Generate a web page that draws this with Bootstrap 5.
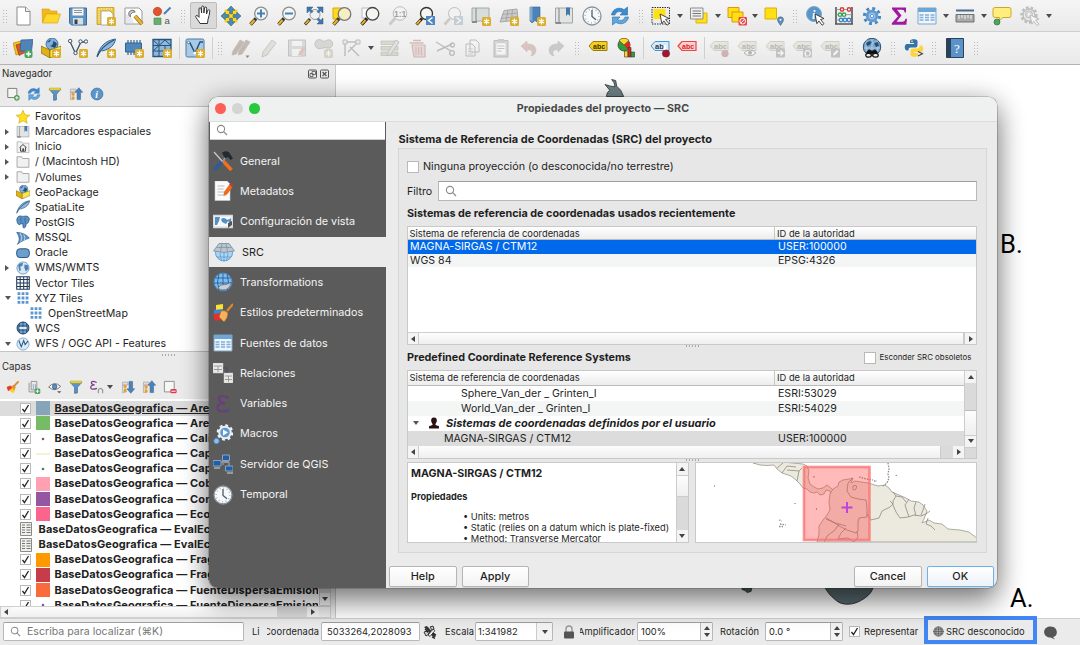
<!DOCTYPE html>
<html lang="es">
<head>
<meta charset="utf-8">
<title>QGIS</title>
<meta name="viewport" content="width=device-width, initial-scale=1">
<link href="https://cdn.jsdelivr.net/npm/bootstrap@5.3.0/dist/css/bootstrap.min.css" rel="stylesheet">
<script src="https://cdn.jsdelivr.net/npm/bootstrap@5.3.0/dist/js/bootstrap.bundle.min.js"></script>
<style>
html,body{height:645px;overflow:hidden}
body{font-family:Inter,"Liberation Sans",sans-serif;font-size:10.6px;line-height:15px;color:#1e1e1e;background:#ebebeb;width:1080px;white-space:nowrap}
svg{flex:none;display:block}
.app{width:1080px;height:645px}
.tbar{height:32.5px;background:linear-gradient(#f5f5f5,#e9e9e9);border-bottom:1px solid #cfcfcf;padding-left:1px}
.tbar.last{border-bottom:1.5px solid #b4b4b4;height:33px}
.tbar svg{width:20px;height:20px;margin:0 3.875px}
.tbar .hold{width:27.75px;height:27px;background:#dadada;border:1px solid #bcbcbc;border-radius:2px}
.tbar .hold svg{margin:2px 2.875px}
.grip{width:14px;height:14px;flex:none;background:radial-gradient(circle,#b9b9b9 .7px,transparent .9px) 0 0/3px 3px content-box;padding:0 4px}
.vsep{height:22px;width:1px;background:#cfcfcf;flex:none;margin:0 2px 0 3px}
.dar{width:9.9px;flex:none;display:flex;justify-content:center}
.dar::after,.tri-d::after{content:"";border:3px solid transparent;border-top:4px solid #4c4c4c;border-bottom:0}
.off{opacity:.42}
.side{width:336px;border-right:1px solid #c9c9c9;background:#ebebeb}
.dock-t{height:17px;padding:0 5px 0 2px;font-size:9.7px;color:#2a2a2a}
.dbar{height:24px;padding-left:4.5px;gap:5.2px}
.dbar svg{width:16px;height:14px}
.dbar .dar{margin:0 -1px 0 -5px}
.tree{background:#fff;height:246px;width:331px;padding-top:1.5px;border-top:1px solid #c5c5c5;border-bottom:1px solid #c5c5c5;overflow:hidden}
.trow{height:15.15px;padding-left:16px;gap:5px}
.trow svg{width:14px;height:14px}
.trow .tw{width:16px;margin-left:-16px;margin-right:-5px;display:flex;padding-left:4.5px}
.tri-r::after{content:"";border:3px solid transparent;border-left:4px solid #555;border-right:0}
.tri-d::after{border-top-color:#555}
.dots{width:14px;height:2px;background:radial-gradient(circle,#aaa .7px,transparent .9px) 0 0/3px 2px}
.layers{background:#fff;width:331px;height:206.5px;padding-top:1.2px;overflow:hidden;position:relative}
.lrow{height:15.16px;padding-left:19.5px;font-weight:700;font-size:11px;letter-spacing:.1px;color:#222;width:318px;overflow:hidden}
.lrow.cur{background:#dcdcdc;text-decoration:underline;width:331px}
.cb{width:11px;height:11px;border:1px solid #b9b9b9;background:#fff;flex:none}
.cb svg{width:9px;height:9px}
.sw{width:14px;height:14px;margin:0 5px;flex:none;display:flex;align-items:center;justify-content:center}
.lrow .tabi{width:12px;height:14px;margin-right:7px}
.sb{background:#dadada;border:1px solid #cfcfcf;flex:none}
.sb .th{background:linear-gradient(#fdfdfd,#efefef)}
.arr{display:flex;align-items:center;justify-content:center;background:#f4f4f4;flex:none}
.arr::after{content:"";border:3px solid transparent}
.al::after{border-right:4px solid #444;border-left:0}.ar::after{border-left:4px solid #444;border-right:0}
.au::after{border-bottom:4px solid #444;border-top:0}.ad::after{border-top:4px solid #444;border-bottom:0}
.stat{height:27px;border-top:1px solid #cfcfcf;background:#ebebeb;position:relative;font-size:9.3px;letter-spacing:.1px;padding-left:3px}
.fld{background:#fff;border:1px solid #b8b8b8;border-top-color:#9f9f9f;border-radius:2px;height:19px;display:flex;align-items:center;flex:none}
.clipt{overflow:hidden;flex:none}
.spin{width:12px;height:100%;background:#f4f4f4;border-left:1px solid #bbb;display:flex;flex-direction:column;align-items:center;justify-content:center;gap:3px}
.spin::before{content:"";border:3px solid transparent;border-bottom:4px solid #444;border-top:0}
.spin::after{content:"";border:3px solid transparent;border-top:4px solid #444;border-bottom:0}
.crsbox{width:112.5px;height:28px;border:4px solid #4285f4;position:absolute;left:924px;top:-3px;font-size:9.35px;letter-spacing:0;padding-top:3px}
.note{position:absolute;font-family:Roboto,sans-serif;font-size:25.5px;line-height:24px;color:#000}
/* project properties window */
.dlg{position:absolute;left:209px;top:97px;width:788px;height:491px;border-radius:9px;background:#ebebeb;box-shadow:0 0 0 .6px rgba(0,0,0,.3),0 14px 28px rgba(0,0,0,.45),0 0 26px rgba(0,0,0,.2);overflow:hidden}
.dt{height:24.5px;background:#eff1f1;border-bottom:1px solid #dcdcdc;font-weight:700;font-size:10.7px;letter-spacing:.05px;color:#484848}
.tl{width:10.6px;height:10.6px;border-radius:50%}
.nav-side{width:177px;background:#5b5b5b;color:#f3f3f3;font-size:10.8px}
.nsearch{height:18.5px;background:#fff;border-bottom:1px solid #ccc;margin:0 1px 6px;padding-left:6px}
.ni{height:30.32px;padding-left:4px;gap:7px}
.ni svg{width:20px;height:20px}
.ni.on{background:#ebebeb;color:#222}
.ni.on svg{width:22px}
.h-b{font-weight:700;color:#1f1f1f}
.grp{border:1px solid #d6d6d6;background:#e7e7e7;width:589px;height:405px;padding:0 9.5px 0 8px}
.tbl{background:#fff;border:1px solid #c9c9c9;width:570px;overflow:hidden}
.th-r{height:13.5px;background:linear-gradient(#fff,#ececec);border-bottom:1px solid #bcbcbc;font-size:9.35px;line-height:13px}
.c1{width:366px;flex:none;padding-left:2px}
.th-r .c2{border-left:1px solid #c6c6c6;padding-left:2px}
.c2{padding-left:4px}
.alt{background:#f4f6f6}
.btnx{width:67.5px;height:20.5px;border:1px solid #b5b5b5;border-radius:2px;background:linear-gradient(#fff,#f3f3f3);font-size:10.9px;padding:0;color:#1e1e1e;line-height:18px;box-shadow:0 1px 1px rgba(0,0,0,.1);font-weight:500}
.btnx.prim{border:1.5px solid #6db1ec;background:linear-gradient(#fff,#edf3fa)}
</style>
</head>
<body>
<svg class="d-none">
<defs>
<g id="gb"><rect x="11" y="11" width="9" height="9" rx="1.5" fill="#dcae2c"/><path d="M15.500 12.500v6M12.900 14l5.200 3M18.100 14l-5.200 3" stroke="#fff" stroke-width="1.300"/></g>
<g id="mag"><path d="M7 12.500L1.500 18.500" stroke="#333" stroke-width="3.400"/><path d="M5.500 14L1.700 18.200" stroke="#f0b51c" stroke-width="2.200"/><circle cx="12" cy="7.500" r="6.300" fill="#f3f5f4" fill-opacity=".9" stroke="#8c8f8f" stroke-width="1.300"/></g>
<g id="tag"><path d="M1 10l4-4.500h14v9H5z"/></g>
<g id="arrowcur"><path d="M9 8l9 4.500-3.400 1 3.400 4.200-1.900 1.500-3.300-4.300-1.900 2.800z" fill="#fff" stroke="#333" stroke-width=".9"/></g>
<g id="sq9"><path d="M3 2.500h3.600v3.600H3zM8.200 2.500h3.600v3.600H8.200zM13.400 2.500H17v3.600h-3.600zM3 8.200h3.600v3.600H3zM8.200 8.200h3.600v3.600H8.200zM13.400 8.200H17v3.600h-3.600zM3 13.900h3.600v3.600H3zM8.200 13.900h3.600v3.600H8.200zM13.400 13.900H17v3.600h-3.600z"/></g>
<g id="abgb"><use href="#tag" y="-2" fill="#d9d7c8" stroke="#aaa58c"/><text x="5" y="11" font-size="7.500" font-weight="700" font-family="Liberation Sans" fill="#666">abc</text></g>
</defs>
<symbol id="new" viewBox="0 0 20 20"><path d="M4 1h8.500L17 5.500V19H4z" fill="#fff" stroke="#8a8a8a"/><path d="M12.500 1v4.500H17" fill="#eee" stroke="#8a8a8a"/></symbol>
<symbol id="open" viewBox="0 0 20 20"><path d="M1 3h7l1.500 2H16v3H5L1.500 17z" fill="#f2b91b" stroke="#d99a10" stroke-width=".6"/><path d="M5 8h14.500L16.500 17h-15z" fill="#ffd82e" stroke="#dca716" stroke-width=".7"/></symbol>
<symbol id="save" viewBox="0 0 20 20"><path d="M1.500 2h17v17h-15l-2-2z" fill="#5c92c4" stroke="#3d6a96"/><path d="M4.500 2.500h11v7h-11z" fill="#f6f6f6"/><path d="M6 4.500h8M6 6.500h8" stroke="#888" stroke-width=".9"/><path d="M5 12h10v6.500H5z" fill="#d7dde2"/><path d="M6.500 13.500h3V18h-3z" fill="#36414c"/></symbol>
<symbol id="layout" viewBox="0 0 20 20"><path d="M1 1.500h17v17H1z" fill="#f5c733" stroke="#b8911c" stroke-width=".7"/><path d="M5 5h9l3 3v11H5z" fill="#fff" stroke="#999" stroke-width=".8"/><path d="M3 3v14M5 3h12" stroke="#fff" stroke-dasharray="1 1.500"/><use href="#gb"/></symbol>
<symbol id="lman" viewBox="0 0 20 20"><path d="M1 2h14l3 3v13H1z" fill="#fff" stroke="#999"/><path d="M2 8q6 2 8 9H2z" fill="#e4e9ed"/><path d="M11 10l7 8" stroke="#7a5c14" stroke-width="4"/><path d="M11 10l7 8" stroke="#e8b432" stroke-width="2.800"/><path d="M6.300 5.200a3.600 3.600 0 1 0 5 5l-2.300-.2-2-2z" transform="rotate(90 8.500 8)" fill="#c9ccd0" stroke="#555" stroke-width=".8"/></symbol>
<symbol id="style" viewBox="0 0 20 20"><circle cx="5.500" cy="5.500" r="4.200" fill="#e2542c" stroke="#b13c1c" stroke-width=".6"/><path d="M12 8l6.500-6.500" stroke="#4c82b5" stroke-width="2.200"/><path d="M2 12h7v6.500H2z" fill="#66b06f" stroke="#3e8748" stroke-width=".6"/><text x="12.500" y="17.500" font-size="9.500" font-family="Liberation Sans" fill="#555">a</text></symbol>
<symbol id="hand" viewBox="0 0 20 20"><path d="M7 18.500C5.500 15.500 3 13 2.600 11.300c.6-1.500 2.200-.8 3.400 1V4c0-1.700 2-1.700 2.200 0l.4 4V2.200c.2-1.600 2.200-1.500 2.300 0V8l.6-5c.4-1.500 2.200-1.300 2.200.2L13.500 9l1.200-3.500c.6-1.300 2.300-.8 2.100.7-.3 2.800-.9 5.500-1.800 8.300l-.5 4z" fill="#fff" stroke="#333" stroke-width="1"/></symbol>
<symbol id="pan" viewBox="0 0 20 20"><path d="M3.500 3.500h13v13h-13z" fill="#ffda1a"/><path d="M10 0l4 4.300h-2.600v3.500H8.600V4.300H6zM10 20l4-4.300h-2.600v-3.500H8.600v3.500H6zM0 10l4.300-4v2.600h3.500v2.800H4.300V14zM20 10l-4.300-4v2.600h-3.500v2.800h3.500V14z" fill="#4f88bd" stroke="#2e5f8f" stroke-width=".6"/></symbol>
<symbol id="zin" viewBox="0 0 20 20"><use href="#mag"/><path d="M12 3.500v8M8 7.500h8" stroke="#4382bd" stroke-width="2"/></symbol>
<symbol id="zout" viewBox="0 0 20 20"><use href="#mag"/><path d="M8 7.500h8" stroke="#4382bd" stroke-width="2"/></symbol>
<symbol id="zfull" viewBox="0 0 20 20"><path d="M6 13L1 18.500" stroke="#333" stroke-width="3"/><path d="M5 14L1.500 18" stroke="#f0b51c" stroke-width="1.800"/><circle cx="11" cy="8.500" r="5" fill="#eef1f2" stroke="#999"/><path d="M3 1h6L6.800 3.200 9 5.500 7.500 7 5.200 4.800 3 7zM19 1h-6l2.200 2.200L13 5.500 14.500 7l2.300-2.200L19 7zM19 18h-6l2.200-2.200-2.200-2.300 1.500-1.500 2.300 2.200L19 12z" fill="#4178ab" stroke="#285a87" stroke-width=".5"/></symbol>
<symbol id="zsel" viewBox="0 0 20 20"><path d="M1 2h11v11H1z" fill="#ffd91c" stroke="#d5a90e"/><path d="M7 12.500L1.500 18.500" stroke="#333" stroke-width="3.400"/><path d="M5.500 14L1.700 18.200" stroke="#f0b51c" stroke-width="2.200"/><circle cx="12.500" cy="8" r="6.300" fill="#f7efc4" stroke="#777" stroke-width="1.300"/></symbol>
<symbol id="zlay" viewBox="0 0 20 20"><path d="M2 2h10v10H2z" fill="#fafafa" stroke="#bbb"/><path d="M7 12.500L1.500 18.500" stroke="#222" stroke-width="3.400"/><path d="M5.500 14L1.700 18.200" stroke="#f0b51c" stroke-width="2"/><circle cx="12.500" cy="7.800" r="6.300" fill="#f3f5f0" stroke="#444" stroke-width="1.300"/></symbol>
<symbol id="z11" viewBox="0 0 20 20"><path d="M7 12.500L1.500 18.500" stroke="#999" stroke-width="2.600"/><circle cx="12" cy="7.500" r="6.800" fill="#f6f6f6" stroke="#777"/><text x="6" y="10.500" font-size="8.500" font-weight="700" font-family="Liberation Sans" fill="#333">1:1</text></symbol>
<symbol id="zlast" viewBox="0 0 20 20"><path d="M7 12.500L1.500 18.500" stroke="#222" stroke-width="3"/><path d="M5.500 14L1.700 18.200" stroke="#f0b51c" stroke-width="1.800"/><circle cx="11.500" cy="7.500" r="6" fill="#f5f5f2" stroke="#333" stroke-width="1.300"/><path d="M11 10h9v9h-9z" fill="#4e88bf"/><path d="M17.500 11.500l-4 3 4 3" fill="none" stroke="#fff" stroke-width="1.500"/></symbol>
<symbol id="znext" viewBox="0 0 20 20"><path d="M7 12.500L1.500 18.500" stroke="#999" stroke-width="2.600"/><circle cx="11.500" cy="7.500" r="6" fill="#f5f5f5" stroke="#777"/><path d="M11 10h9v9h-9z" fill="#8fa3b2"/><path d="M13.500 11.500l4 3-4 3" fill="none" stroke="#fff" stroke-width="1.500"/></symbol>
<symbol id="nmap" viewBox="0 0 20 20"><path d="M1 2h4v14H1zM5 2h13v13H5z" fill="#d9dcdc" stroke="#9ba0a0" stroke-width=".9"/><path d="M1 16h5" stroke="#888" stroke-width="2"/><use href="#gb"/></symbol>
<symbol id="n3d" viewBox="0 0 20 20"><path d="M5 4.500l13-1.500 1 11-18 2z" fill="#c9cccb" stroke="#9a9d9c" stroke-width=".8"/><path d="M9 4l-2 11M13.500 3.500l-1 11M3.500 8.500l15-1.500M2 12.500l17-2" stroke="#999" stroke-width=".7"/><use href="#gb"/></symbol>
<symbol id="nbm" viewBox="0 0 20 20"><path d="M4 1h10v17l-5-3.500L6 17l-2-2z" fill="#4b82b8" stroke="#35658f" stroke-width=".6"/><path d="M4 1h2.500v15L4 14z" fill="#7fa9cf"/><use href="#gb"/></symbol>
<symbol id="sbm" viewBox="0 0 20 20"><path d="M1.500 2H5v15H1.500zM5 2h13.500v15H5z" fill="#e2e4e4" stroke="#9a9d9d" stroke-width=".9"/><path d="M12 1.500h4V10l-2-2-2 2z" fill="#4378ab"/><path d="M1.500 17H7" stroke="#888" stroke-width="2"/></symbol>
<symbol id="clock" viewBox="0 0 20 20"><circle cx="10" cy="10" r="9" fill="#f6f8f9" stroke="#8e9294" stroke-width="1.300"/><circle cx="10" cy="10" r="6.900" fill="none" stroke="#9cbcd6" stroke-width="1.500" stroke-dasharray="1 2.610"/><path d="M10 4v6.500l4 3.200" fill="none" stroke="#555b60" stroke-width="1.300"/></symbol>
<symbol id="refresh" viewBox="0 0 20 20"><path d="M1.500 9C2.300 3 9 .3 14 3.700L17.500 1v8H10l2.500-2.500C9 4.500 5.800 6 5 9z" fill="#3a8dd4" stroke="#2b6ba6" stroke-width=".6"/><path d="M18.500 11c-.8 6-7.500 8.700-12.500 5.300L2.500 19v-8H10l-2.500 2.500c3.500 2 6.700.5 7.500-2.500z" fill="#5fa8e0" stroke="#2b6ba6" stroke-width=".6"/></symbol>
<symbol id="sel" viewBox="0 0 20 20"><path d="M1 1.500h17.500V18H1z" fill="#ececec" stroke="#333" stroke-dasharray="1.500 1"/><path d="M2.500 3h12v10h-12z" fill="#ffe012"/><use href="#arrowcur"/></symbol>
<symbol id="form" viewBox="0 0 20 20"><path d="M7 7h11v10H7z" fill="#ffe01a" stroke="#dcb512"/><path d="M1.500 2H14v11H1.500z" fill="#f0f0ee" stroke="#8c8c8c"/><path d="M3.500 5h8.500M3.500 7.500h8.500M3.500 10h8.500" stroke="#777" stroke-width="1.100"/></symbol>
<symbol id="desel" viewBox="0 0 20 20"><path d="M1 1.500h11v10H1z" fill="#ffe012" stroke="#e0960e"/><path d="M5 6h11v10H5z" fill="#ffe012" stroke="#e0960e"/><rect x="11.500" y="11" width="8.500" height="8.500" rx="1" fill="#e8474b"/><circle cx="15.700" cy="15.200" r="2.800" fill="none" stroke="#fff"/><path d="M13.700 17.200l4-4" stroke="#fff"/></symbol>
<symbol id="selloc" viewBox="0 0 20 20"><path d="M1 2h11.500v11H1z" fill="#ffe012" stroke="#e0ae0e"/><path d="M16.500 19.500c-2-3-3-4.300-3-5.700a3 3 0 0 1 6 0c0 1.400-1 2.700-3 5.700z" fill="#5d8db0" stroke="#3f6c8e" stroke-width=".6"/><circle cx="16.500" cy="13.800" r="1" fill="#fff"/></symbol>
<symbol id="ident" viewBox="0 0 20 20"><circle cx="8" cy="8" r="7.500" fill="#5a94c8" stroke="#7ea7c9"/><text x="6" y="12.500" font-size="12" font-style="italic" font-weight="700" font-family="Liberation Serif" fill="#fff">i</text><use href="#arrowcur"/></symbol>
<symbol id="abac" viewBox="0 0 20 20"><path d="M2 1v17M18 1v17M1 18h18" stroke="#555" stroke-width="1.600"/><path d="M2 3.500h16M2 8.700h16M2 14h16" stroke="#888" stroke-width=".8"/><g fill="#fff" stroke-width="1.400"><g stroke="#d8393b"><circle cx="8" cy="3.500" r="1.700"/><circle cx="15" cy="3.500" r="1.700"/></g><g stroke="#3aa455"><circle cx="6" cy="8.700" r="1.700"/><circle cx="10" cy="8.700" r="1.700"/></g><g stroke="#3f84c4"><circle cx="7" cy="14" r="1.700"/><circle cx="11" cy="14" r="1.700"/><circle cx="15" cy="14" r="1.700"/></g></g></symbol>
<symbol id="gear" viewBox="0 0 20 20"><circle cx="10" cy="10" r="7.600" fill="none" stroke="#4787c3" stroke-width="3" stroke-dasharray="2.900 3.070"/><circle cx="10" cy="10" r="4.800" fill="#9cc3e6" stroke="#5f9bd2" stroke-width="2.800"/><circle cx="10" cy="10" r="1.700" fill="#eef4fa" stroke="#4787c3" stroke-width=".8"/></symbol>
<symbol id="sigma" viewBox="0 0 20 20"><path d="M3 1.500h14v5h-1.300c-.3-2-1-2.700-3-2.700H8l4.500 5.700-5 6.200h5.700c2 0 2.800-1 3.300-3H18l-.7 6H2.800v-1.500L9 10.200 3 3z" fill="#a0189f"/></symbol>
<symbol id="tab" viewBox="0 0 20 20"><path d="M1 2h18v16H1z" fill="#eef6fc" stroke="#7aa7cb"/><path d="M1 2h18v4H1z" fill="#6fa6d3"/><path d="M2.500 9h4M8 9h4M13.500 9h4M2.500 11.500h4M8 11.500h4M13.500 11.500h4M2.500 14h4M8 14h4M13.500 14h4" stroke="#7fb0da" stroke-width="1.400"/></symbol>
<symbol id="ruler" viewBox="0 0 20 20"><path d="M1 4.500h18" stroke="#466b8f" stroke-width="2"/><path d="M1 8.500h18V16H1z" fill="#a9aaaa" stroke="#666" stroke-width=".9"/><path d="M4 9v4M7 9v3M10 9v4M13 9v3M16 9v4" stroke="#fff" stroke-width=".9"/></symbol>
<symbol id="tip" viewBox="0 0 20 20"><path d="M3 1.500h14q2 0 2 2v6q0 2-2 2h-6l-4 3.500.500-3.500H3q-2 0-2-2v-6q0-2 2-2z" fill="#ffee7d" stroke="#c9a92c"/><circle cx="5" cy="16" r="3" fill="#55a25a" stroke="#2f7436" stroke-width=".7"/></symbol>
<symbol id="act" viewBox="0 0 20 20"><circle cx="9" cy="9" r="7.500" fill="none" stroke="#777" stroke-width="2.400" stroke-dasharray="2.600 1.990"/><circle cx="9" cy="9" r="6" fill="#eee" stroke="#777" stroke-width="1.400"/><circle cx="9" cy="8.500" r="3.600" fill="#bbb" stroke="#777"/><path d="M8 6.500l3 2-3 2z" fill="#fff"/><path d="M10 9l9 4-3.400 1 3.400 4.200-1.900 1.500-3.300-4.300-1.900 2.800z" fill="#fff" stroke="#777"/></symbol>
<symbol id="dsrc" viewBox="0 0 20 20"><path d="M0 5l10-2.500 3 11L3 17z" fill="#f0c419" stroke="#a87e14" stroke-width=".6"/><path d="M3 7l10-3 2 9-9 4.500z" fill="#d9552b" stroke="#913214" stroke-width=".6"/><path d="M8 2l12-.5-1.500 11.500H7z" fill="#4f84b8" stroke="#2f5c88" stroke-width=".7"/><rect x="11.500" y="12" width="8" height="8" rx="2" fill="#4ea45e"/><path d="M15.500 13.500v5M13 16h5" stroke="#fff" stroke-width="1.600"/></symbol>
<symbol id="gpkg" viewBox="0 0 20 20"><circle cx="11" cy="6" r="6" fill="#7faed8" stroke="#27537d" stroke-width=".7"/><path d="M6 4q3 1 4-3M9 8q4-1 3-5 3 1 4 3l-2 4" fill="#234b72"/><path d="M0 8l9 4v8l-9-5z" fill="#e0b114" stroke="#705704" stroke-width=".6"/><path d="M9 12l11-4v7L9 20z" fill="#ffe34a" stroke="#705704" stroke-width=".6"/></symbol>
<symbol id="gpkgn" viewBox="0 0 20 20"><use href="#gpkg"/><use href="#gb"/></symbol>
<symbol id="vn" viewBox="0 0 20 20"><path d="M2 3.500l5.500 12L13 4h5" fill="none" stroke="#3c5468" stroke-width="1.300"/><g fill="#fff" stroke="#3c5468"><circle cx="2.200" cy="3" r="1.700"/><circle cx="7.500" cy="15" r="1.700"/><circle cx="12.500" cy="3.500" r="1.700"/><circle cx="18" cy="3.500" r="1.700"/></g><use href="#gb"/></symbol>
<symbol id="fe" viewBox="0 0 20 20"><path d="M1 18C4 9 8 3 19.500 1c-1 6-5 10-13.500 12" fill="#8fb7dc" stroke="#35648f"/><path d="M1 19C4 11 10 6 18 2" fill="none" stroke="#27537d" stroke-width="1.200"/></symbol>
<symbol id="fen" viewBox="0 0 20 20"><use href="#fe"/><use href="#gb"/></symbol>
<symbol id="chip" viewBox="0 0 20 20"><path d="M1.500 5h16v9H1.500z" fill="#4f86bb" stroke="#35648f"/><path d="M4 2V5M7 2V5M10 2V5M13 2V5M16 2V5M4 14v3M7 14v3M10 14v3" stroke="#35648f" stroke-width="1.200"/><use href="#gb"/></symbol>
<symbol id="mesh" viewBox="0 0 20 20"><path d="M1 1.500h18v17H1z" fill="#8fb7dc" stroke="#27537d" stroke-width="1.300"/><path d="M1 7.500h18M1 13h18M7 1.500v17M13 7v11M1 2l6 5.500L13 2l6 5.500M1 13l6-5.500" fill="none" stroke="#27537d"/><use href="#gb"/></symbol>
<symbol id="virt" viewBox="0 0 20 20"><rect x="1" y="1" width="18" height="18" rx="1.500" fill="#a9c9e6" stroke="#4a7aa6"/><path d="M3 5h2l5 10L15 4h3" fill="none" stroke="#27537d" stroke-width="1.500"/><circle cx="3.500" cy="4.500" r="1.200" fill="#fff" stroke="#27537d" stroke-width=".6"/><circle cx="10" cy="15" r="1.600" fill="#fff"/><use href="#gb"/></symbol>
<symbol id="pens" viewBox="0 0 20 20"><path d="M1 17l1-4L9 2l4 2-8 12zM7 17l1-4 7-11L19 4l-8 12z" fill="#8d6b5c" stroke="#777" stroke-width=".8"/><path d="M14.500 17.500h4l-2 2.500z" fill="#000"/></symbol>
<symbol id="pen" viewBox="0 0 20 20"><path d="M3 19l1-5L13 2l4 3-9 12z" fill="#ccc9b6" stroke="#888" stroke-width=".9"/></symbol>
<symbol id="sav2" viewBox="0 0 20 20"><path d="M1.500 2h17v16h-17z" fill="#bbb" stroke="#888"/><path d="M5 3h10v5H5zM5 11h9v7H5z" fill="#f4f4f4"/><path d="M11 18l1-4 5-6 2.500 2-5 7z" fill="#c78a80"/></symbol>
<symbol id="blob" viewBox="0 0 20 20"><path d="M1 6c0-5 5-5 7-3.500C11 5 12 1 16 2c4 1.500 3 7 0 8-3 .5-5-1-7 0-3 1.500-8 1-8-4z" fill="#b3b2a8" stroke="#888"/><rect x="10" y="11" width="9" height="9" rx="2" fill="#b5ad90"/><path d="M14.500 12.500v6M12 14l5 3M17 14l-5 3" stroke="#fff"/></symbol>
<symbol id="vtx" viewBox="0 0 20 20"><path d="M3 4h13M3 4v14M16 4L6 14M8 9l9 9" fill="none" stroke="#777" stroke-width="1.400"/><path d="M1 2h4v4H1zM14 2h4v4h-4z" fill="#ddd" stroke="#777"/></symbol>
<symbol id="medit" viewBox="0 0 20 20"><path d="M1 3h17v3.500H1zM1 8.500h17V12H1zM1 14h17v3.500H1z" fill="#b9bb90" stroke="#888" stroke-width=".8"/><path d="M7 18l1-4L16 2l3 2-8 12z" fill="#ccc" stroke="#777" stroke-width=".8"/></symbol>
<symbol id="trash" viewBox="0 0 20 20"><path d="M1.500 5h14M5 2.500h8" stroke="#b0716e" stroke-width="1.600"/><path d="M4 7h13v12H6z" fill="#dcbab7" stroke="#a96f6c" stroke-width="1.200"/><path d="M8 9v8M10.700 9v8M13.400 9v8" stroke="#a96f6c" stroke-width="1.100"/></symbol>
<symbol id="cut" viewBox="0 0 20 20"><path d="M1 4l15 9M2 13l15-7" stroke="#777" stroke-width="1.400"/><circle cx="17" cy="15" r="2.300" fill="none" stroke="#777" stroke-width="1.300"/><circle cx="17.500" cy="7" r="2" fill="none" stroke="#777" stroke-width="1.300"/></symbol>
<symbol id="copy" viewBox="0 0 20 20"><path d="M7 2h6l3 3v9H7zM3 6h6l3 3v9H3z" fill="#f4f4f4" stroke="#777"/><path d="M5 11h5M5 13.500h5M5 16h5" stroke="#999"/></symbol>
<symbol id="paste" viewBox="0 0 20 20"><path d="M3 2.500h14V19H3z" fill="#b5b5a8" stroke="#777"/><path d="M5 5h10v12H5z" fill="#fff" stroke="#999" stroke-width=".6"/><path d="M7 1h6v3H7z" fill="#999"/><path d="M6.500 8h7M6.500 10.500h7M6.500 13h4" stroke="#888"/></symbol>
<symbol id="undo" viewBox="0 0 20 20"><path d="M2 8l6-5v3c7-.5 10 3.500 8.500 8.500-.8 2-2.500 3-4.500 3.500 2-3 2-6.500-4-6.500V14z" fill="#b98880" stroke="#9c7b75" stroke-width=".6"/></symbol>
<symbol id="redo" viewBox="0 0 20 20"><path d="M18 8l-6-5v3C5 5.500 2 9.500 3.500 14.500c.8 2 2.500 3 4.500 3.500-2-3-2-6.500 4-6.500V14z" fill="#8f9a90" stroke="#808a80" stroke-width=".6"/></symbol>
<symbol id="abc" viewBox="0 0 20 20"><use href="#tag" y="-2" fill="#f5cf1f" stroke="#9c7c10"/><text x="5" y="10.500" font-size="7" font-weight="700" font-family="Liberation Sans" fill="#3d3000">abc</text></symbol>
<symbol id="dia" viewBox="0 0 20 20"><circle cx="8" cy="7" r="6" fill="#2f9e3d" stroke="#333" stroke-width=".7"/><path d="M8 7L3 2.500a6.500 6.500 0 0 1 10 0z" fill="#ffd81f" stroke="#333" stroke-width=".6"/><path d="M8 7l5.500-3.500q2 5-1.500 8z" fill="#e02a26"/><path d="M8.500 13h3.500v6H8.500z" fill="#ffd81f" stroke="#333" stroke-width=".6"/><path d="M12 9.500h3V19h-3z" fill="#d62a22" stroke="#333" stroke-width=".6"/><path d="M15 14h3.500v5H15z" fill="#2f9e3d" stroke="#333" stroke-width=".6"/></symbol>
<symbol id="abp" viewBox="0 0 20 20"><use href="#tag" y="-2" fill="#d5eafa" stroke="#3e97da"/><text x="5" y="10.500" font-size="7.500" font-weight="700" font-family="Liberation Sans" fill="#334">ab</text><path d="M15 7v6" stroke="#fff" stroke-width="2.500"/><circle cx="16" cy="15.500" r="3.600" fill="#a8152a" stroke="#6e0b1b" stroke-width=".6"/></symbol>
<symbol id="abr" viewBox="0 0 20 20"><use href="#tag" y="-2" fill="#fbd0d0" stroke="#ef4347" stroke-width="1.200"/><text x="5" y="10.500" font-size="7" font-weight="700" font-family="Liberation Sans" fill="#d22">abc</text></symbol>
<symbol id="ag1" viewBox="0 0 20 20"><use href="#abgb"/><circle cx="16" cy="15.500" r="3.600" fill="#a2636d"/></symbol>
<symbol id="ag2" viewBox="0 0 20 20"><use href="#abgb"/><path d="M7 15q6-6 12 0-6 5.500-12 0z" fill="#fff" stroke="#666"/><circle cx="13" cy="14.800" r="2" fill="#666"/></symbol>
<symbol id="ag3" viewBox="0 0 20 20"><use href="#abgb"/><rect x="11" y="10.500" width="9" height="9" rx="1" fill="#888"/><path d="M12.500 15h5M15.500 12.500l2.500 2.500-2.500 2.500" fill="none" stroke="#fff" stroke-width="1.400"/></symbol>
<symbol id="ag4" viewBox="0 0 20 20"><use href="#abgb"/><rect x="11" y="10.500" width="9" height="9" rx="1" fill="#888"/><path d="M14 17.500a2.700 2.700 0 1 1 3 .2M13.500 15v3h3" fill="none" stroke="#fff" stroke-width="1.200"/></symbol>
<symbol id="ag5" viewBox="0 0 20 20"><use href="#abgb"/><rect x="11" y="10.500" width="9" height="9" rx="1" fill="#888"/><path d="M13 17.500l.5-2L17 12l1.500 1.500-3.500 3.500z" fill="#fff"/></symbol>
<symbol id="bino" viewBox="0 0 20 20"><circle cx="10" cy="9" r="8.700" fill="#7ba5cd" stroke="#284e74"/><path d="M3 5h14M2 10h16M10 1v12M5 2q-2 6 0 12M15 2q2 6 0 12" fill="none" stroke="#c3daee" stroke-width=".7"/><path d="M4 5q3-3 6-1l-2 3-3 1zM12 5l4-1 1 4-3 1z" fill="#2b5077"/><path d="M4 16c0-2 2-4.500 3.500-4.500l1.500 1h2l1.500-1C14 11.500 16 14 16 16l-5 1-1-1.500L9 17z" fill="#111"/><ellipse cx="6.500" cy="17.300" rx="2.800" ry="1.900" fill="#eee" stroke="#111" stroke-width="1.200"/><ellipse cx="13.500" cy="17.300" rx="2.800" ry="1.900" fill="#eee" stroke="#111" stroke-width="1.200"/></symbol>
<symbol id="py" viewBox="0 0 20 20"><path d="M6 5V3c0-2.500 7.500-2.500 7.500 0v4c0 2-1 2.500-2.500 2.500H7c-2 0-2.500 1-2.500 3H3C0 12.500 0 6 3 6h7V5z" fill="#3572a5"/><circle cx="8" cy="3.200" r=".8" fill="#fff"/><path d="M14 15v2c0 2.500-7.500 2.500-7.500 0v-4c0-2 1-2.500 2.500-2.500h4c2 0 2.500-1 2.500-3H17c3 0 3 6.500 0 6.500h-7v1z" fill="#ffd43b"/><path d="M14 13.500l4.500 2.200L14 18" fill="none" stroke="#444" stroke-width="1.100"/></symbol>
<symbol id="help" viewBox="0 0 20 20"><path d="M1.500 .5h17v19h-17z" fill="#5b93c8" stroke="#27445f"/><path d="M1.500 .5H6v19H1.500z" fill="#2b4157"/><text x="9" y="14.500" font-size="13" font-family="Liberation Serif" fill="#fff">?</text></symbol>
<symbol id="addb" viewBox="0 0 20 20"><path d="M2.500 2h13v13h-13z" fill="#f4f4f2" stroke="#7f7f7a" stroke-width="1.400"/><circle cx="15.500" cy="15.500" r="4" fill="#4d9c5a"/><path d="M15.500 13v5M13 15.500h5" stroke="#fff" stroke-width="1.300"/></symbol>
<symbol id="funnel" viewBox="0 0 20 20"><path d="M1.500 3h17L12 10.500v8l-4 .500v-8.500z" fill="#5c93c8" stroke="#35648f"/><path d="M2 1.500h16v3H2z" fill="#f2dc2e" stroke="#a39526" stroke-width=".6"/></symbol>
<symbol id="coll" viewBox="0 0 20 20"><path d="M2 3h8v4H2zM2 8h4v10H2z" fill="#ddd" stroke="#999" stroke-width=".8"/><path d="M4 8h4v4H4zM4 14h4v4H4z" fill="#f19b2c"/><path d="M14 1l5.500 6.500H16.500V18h-5V7.500H8.500z" fill="#4b82b8" stroke="#2e5f8f" stroke-width=".7"/></symbol>
<symbol id="expd" viewBox="0 0 20 20"><path d="M2 3h8v4H2zM2 8h4v10H2z" fill="#ddd" stroke="#999" stroke-width=".8"/><path d="M4 7h4v4H4zM4 13h4v4H4z" fill="#f19b2c"/><path d="M14 19l5.500-6.500H16.500V2h-5v10.500H8.500z" fill="#4b82b8" stroke="#2e5f8f" stroke-width=".7"/></symbol>
<symbol id="info" viewBox="0 0 20 20"><circle cx="10" cy="10" r="8.500" fill="#5a94c8" stroke="#3c6f9e"/><text x="7.500" y="15" font-size="14" font-style="italic" font-weight="700" font-family="Liberation Serif" fill="#fff">i</text></symbol>
<symbol id="star" viewBox="0 0 20 20"><path d="M10 .5l2.700 6.400 6.900.600-5.200 4.500 1.600 6.900L10 15.200l-6 3.700L5.600 12 .4 7.500l6.900-.600z" fill="#ffe11f" stroke="#dba913"/></symbol>
<symbol id="home" viewBox="0 0 20 20"><path d="M1.500 2.500H8l1 2h9.500v13.500h-17z" fill="#f1f1f1" stroke="#aaa"/><path d="M5 11l5-4.500 5 4.500M6.500 10.500V16h7v-5.500" fill="none" stroke="#444" stroke-width="1.400"/><path d="M9 12h2.500v4H9z" fill="#444"/></symbol>
<symbol id="fold" viewBox="0 0 20 20"><path d="M1.500 2.500H8l1.500 2.500h9v12.500h-17z" fill="#f1f1f1" stroke="#9c9c9c" stroke-width="1.200"/></symbol>
<symbol id="pg" viewBox="0 0 20 20"><path d="M2 4c2-4 6-2 8-2s7-2 9 3c0 4-2 7-4 8l-1-1v4c-1 3-4 3-4 1v-5c-1 1-3 1-3 0-1 3-4 2-5-1S1 6 2 4z" fill="#5a90c4" stroke="#2f5d8a" stroke-width="1.200"/><path d="M7 4v7M13 4v7" stroke="#2f5d8a"/></symbol>
<symbol id="ms" viewBox="0 0 20 20"><path d="M1 2c7 0 14 3 18 8-5 2-11 4-17 9 4-6 3-11-1-17z" fill="#5a90c4" stroke="#2f5d8a"/><path d="M6 3q4 6 1 12M11 5q3 4 1 8" fill="none" stroke="#cfe0f0" stroke-width="1.200"/></symbol>
<symbol id="ora" viewBox="0 0 20 20"><rect x="1" y="4" width="18" height="12.500" rx="4.500" fill="#6b9fd0" stroke="#27537d" stroke-width="1.400"/></symbol>
<symbol id="gl" viewBox="0 0 20 20"><circle cx="10" cy="10" r="8.700" fill="#d6e7f5" stroke="#4a7fb0"/><path d="M3 6q3-4 7-3l-1 4-3 1 1 5-2 2zM12 5l5 1 1 5-4 4-2-5z" fill="#4a82b6"/></symbol>
<symbol id="vt" viewBox="0 0 20 20"><path d="M2 2h16v16H2z" fill="#fff"/><path d="M6 1v18M11 1v18M16 1v18M1 5h18M1 10h18M1 15h18M1 1h18v18H1z" fill="none" stroke="#203a55" stroke-width="1.500"/></symbol>
<symbol id="xyz" viewBox="1 1 18 18"><g fill="#5a97d3"><use href="#sq9"/></g></symbol>
<symbol id="wcs" viewBox="0 0 20 20"><circle cx="10" cy="10" r="8.500" fill="#6fa1d0" stroke="#1d3f60" stroke-width="1.400"/><path d="M2 7h16M2 13h16M10 1v18M5 4q-2 6 0 12M15 4q2 6 0 12" fill="none" stroke="#1d3f60" stroke-width="1"/><path d="M5 8.500h10v3H5z" fill="#dbe9f6"/></symbol>
<symbol id="wfs" viewBox="0 0 20 20"><circle cx="10" cy="10" r="8.700" fill="#dcebf7" stroke="#5b8fc0"/><path d="M4 5l3.500 9L11 5l2 6 4-5" fill="none" stroke="#2b5a88" stroke-width="1.500"/></symbol>
<symbol id="brush" viewBox="0 0 20 20"><path d="M1 12l6-3 6 6-3 4z" fill="#f5d328"/><path d="M1 10l5-2 3 3-6 5z" fill="#e33b2c"/><path d="M7 9l4-2 3 3-2 5z" fill="#e8932b"/><path d="M11 9l7-7" stroke="#d28a2c" stroke-width="2.500"/></symbol>
<symbol id="grpadd" viewBox="0 0 20 20"><path d="M3 4v13h10M6 2h8v12H6z" fill="#e8eaea" stroke="#777"/><path d="M9 6v7M12 6v7" stroke="#6d8fb0"/><rect x="11" y="12" width="8" height="8" rx="2" fill="#4ea45e"/><path d="M15 13.500v5M12.500 16h5" stroke="#fff" stroke-width="1.300"/></symbol>
<symbol id="eye" viewBox="0 0 20 20"><path d="M1 10q8-9 17-1-8 9-17 1z" fill="#fff" stroke="#666" stroke-width="1.300"/><circle cx="9.500" cy="9.500" r="3.300" fill="#5a90c4" stroke="#27537d"/><path d="M13 16h6l-3 3z" fill="#555"/></symbol>
<symbol id="eps" viewBox="0 0 20 20"><path d="M9.500 3.500Q2 0 2 4q0 2.500 4.500 3Q1 7.500 1 10.500q0 4.500 9 1.500" fill="none" stroke="#7c3f8c" stroke-width="1.800"/><path d="M12 19v-5q3-4 6 0v5" fill="none" stroke="#999" stroke-width="1.800"/></symbol>
<symbol id="rem" viewBox="0 0 20 20"><path d="M2 2h14v15H2z" fill="#f6f6f4" stroke="#888" stroke-width="1.300"/><rect x="10.500" y="13" width="9" height="6" rx="2" fill="#dc3a4b"/><path d="M12 16h6" stroke="#fff" stroke-width="1.500"/></symbol>
<symbol id="ltab" viewBox="0 0 12 14"><path d="M.5.500h11v13H.5z" fill="#efefec" stroke="#8b8b86"/><path d="M2 3h3M6.500 3h4M2 5.500h3M6.500 5.500h4M2 8h3M6.500 8h4M2 10.500h3M6.500 10.500h4" stroke="#777" stroke-width="1.100"/></symbol>
<symbol id="chk" viewBox="0 0 9 9"><path d="M1.500 5l2 2.700L7.500 1" fill="none" stroke="#222" stroke-width="1.300"/></symbol>
<symbol id="srch" viewBox="0 0 12 12"><circle cx="5" cy="5" r="3.600" fill="none" stroke="#8a8a8a" stroke-width="1.100"/><path d="M7.700 7.700L11 11" stroke="#8a8a8a" stroke-width="1.200"/></symbol>
<symbol id="tools" viewBox="0 0 20 20"><path d="M1 1l8 9" stroke="#c8cdd0" stroke-width="1.200"/><path d="M18.500 19L10 10" stroke="#f0701c" stroke-width="3.600"/><path d="M1.500 18.500L9 11" stroke="#2d5c98" stroke-width="3.800"/><path d="M9 11l4-5" stroke="#999" stroke-width="1.800"/><path d="M9 1.500q6-3.500 8.500 2l2.500 4-2.500 1.500L15 6l-2.500 1.500L10 4z" fill="#222b33"/></symbol>
<symbol id="meta" viewBox="0 0 20 20"><path d="M2 0h12l3 3v16.500H2z" fill="#fbfbfb" stroke="#ccc" stroke-width=".6"/><path d="M4.500 5h7M4.500 8h6M4.500 11h7M4.500 14h9" stroke="#bbb"/><path d="M11 11l5-7 3.500 2-5 7-4 2z" fill="#f06a1e"/><path d="M16 4l1.500-2L20 3.500 19.500 6z" fill="#b8412b"/></symbol>
<symbol id="view" viewBox="0 0 20 20"><path d="M0 3h20v13H0z" fill="#e9e9e9" stroke="#bbb" stroke-width=".7"/><path d="M2 5h16v9H2z" fill="#f5f9fc"/><path d="M2 5h5l-1 4-2 4H2zM8 7q3-2 5 0t5-1v6l-3-3-2 3-4-2z" fill="#5390c6"/><path d="M15 11l4-2v4l-4 3z" fill="#555"/></symbol>
<symbol id="crs" viewBox="0 0 22 20"><circle cx="11" cy="10.500" r="8.500" fill="#a9d5f7" stroke="#5e9ccd"/><path d="M4 15h14M11 10v9M7 11q0 5 2 8M15 11q0 5-2 8" fill="none" stroke="#5e9ccd" stroke-width=".8"/><path d="M6 1.500h10L21.500 9Q11 12 .5 9z" fill="#b7c6d1" stroke="#7b8d99" stroke-width=".8"/><path d="M9 1.500L7.500 10M13 1.500l1.500 8.500M3.500 5.500h15" stroke="#7b8d99" stroke-width=".7"/></symbol>
<symbol id="trf" viewBox="0 0 20 20"><circle cx="10" cy="10" r="9" fill="#7dbcf0" stroke="#4a8cc6"/><path d="M2 6h16M1 11h18M10 1v18M6 2q-3 8 0 16M14 2q3 8 0 16" fill="none" stroke="#2a5f92" stroke-width=".9"/><path d="M8 13q7 0 10-3-1 8-8 8-3 0-5-2z" fill="#c6cfd6" stroke="#667" stroke-width=".7"/></symbol>
<symbol id="est" viewBox="0 0 20 20"><path d="M3 2l7-1v6l-7 1z" fill="#ffe02a"/><path d="M1 7l9-1v5l-9 1z" fill="#3787d8"/><path d="M0 11l9-1 2 6-9 2z" fill="#e3302b"/><path d="M20 1l-6 7" stroke="#e0852a" stroke-width="2.200"/><path d="M8 8q4-1.500 7 2 0 5-4 9l-5-5z" fill="#f3b25c" stroke="#a85c16" stroke-width=".6"/></symbol>
<symbol id="rel" viewBox="0 0 20 20"><path d="M0 0h10v10H0zM11 10h9v10h-9z" fill="#e9e9e6" stroke="#c5c5c0" stroke-width=".5"/><path d="M1 3h8M1 6.500h8M5 3v6M12 13h7M12 16.500h7M15.500 13v6" stroke="#999"/><path d="M10 5h4v5" fill="none" stroke="#3d5266"/></symbol>
<symbol id="epsb" viewBox="0 0 20 20"><path d="M14.500 5V3.500q-8.500-3.500-8.500 1 0 4 6 4.500-7.500.500-7.500 4.500 0 6 10.500 3V15" fill="none" stroke="#6d3b80" stroke-width="2"/></symbol>
<symbol id="mac" viewBox="0 0 20 20"><circle cx="12" cy="8.500" r="7" fill="none" stroke="#f2f2f2" stroke-width="2.600" stroke-dasharray="2.800 2.700"/><circle cx="12" cy="8.500" r="5.800" fill="#5b9bd8" stroke="#eee" stroke-width="2"/><path d="M10 5.500l5 3-5 3z" fill="#fff"/><circle cx="3.500" cy="17" r="2.700" fill="#8fc0ee" stroke="#4d8fcc"/></symbol>
<symbol id="srv" viewBox="0 0 20 20"><path d="M4 8h12v8M10 6v5" stroke="#aaa" fill="none"/><g fill="#1d5fae" stroke="#8fa3b5"><path d="M0 6.500h8v5.500H0zM9.500 1h7v5.500h-7zM12.500 12h7.500v5h-7.500z"/></g><path d="M1 14h6M14 19h6M11 8h5" stroke="#999" stroke-width="1.800"/></symbol>
<symbol id="user" viewBox="0 0 12 12"><path d="M6 .5c2.500 0 3.300 2 2.700 4.200L7.500 7v1l3.500 1.200V11.500H1V9.200L4.500 8V7L3.300 4.700C2.700 2.500 3.500.5 6 .5z" fill="#2a1214"/></symbol>
<symbol id="lock" viewBox="0 0 12 14"><path d="M3 7V4q0-3 3-3t3 3v3" fill="none" stroke="#999" stroke-width="1.400"/><rect x="1" y="6.500" width="10" height="7" rx="1" fill="#555"/></symbol>
<symbol id="sat" viewBox="0 0 14 14"><path d="M1 2l3-1 9 10-2 2z" fill="#333"/><path d="M5 10l5-6 2 1.500-5 6z" fill="#eee" stroke="#222" stroke-width=".8"/><path d="M7 2l3-1 1 3-2 1zM1 7l3-1 2 3-3 2z" fill="#ccc" stroke="#222" stroke-width=".9"/><path d="M10 8l3 2M9 12l3 1.500M2 4l3 3" stroke="#222" stroke-width="1.200"/></symbol>
<symbol id="sph" viewBox="0 0 14 14"><circle cx="7" cy="7" r="5" fill="#aaa" stroke="#666"/><path d="M1 7h12M2 9.500h10M7 2v10M4.500 3q-1 4 0 8M9.500 3q1 4 0 8M2.500 4.500h9" fill="none" stroke="#555" stroke-width=".7"/></symbol>
</svg>

<div class="app d-flex flex-column position-relative">
  <div class="tbar d-flex align-items-center">
    <span class="grip" style="width:8px;padding:0 1px"></span>
    <svg><use href="#new"/></svg><svg><use href="#open"/></svg><svg><use href="#save"/></svg><svg><use href="#layout"/></svg><svg><use href="#lman"/></svg><svg><use href="#style"/></svg>
    <span class="grip"></span>
    <span class="hold"><svg><use href="#hand"/></svg></span><svg><use href="#pan"/></svg><svg><use href="#zin"/></svg><svg><use href="#zout"/></svg><svg><use href="#zfull"/></svg><svg><use href="#zsel"/></svg><svg><use href="#zlay"/></svg><svg class="off"><use href="#z11"/></svg><svg><use href="#zlast"/></svg><svg class="off"><use href="#znext"/></svg><svg><use href="#nmap"/></svg><svg><use href="#n3d"/></svg><svg><use href="#nbm"/></svg><svg><use href="#sbm"/></svg><svg><use href="#clock"/></svg><svg><use href="#refresh"/></svg>
    <span class="grip"></span>
    <svg><use href="#sel"/></svg><span class="dar"></span><svg><use href="#form"/></svg><span class="dar"></span><svg><use href="#desel"/></svg><span class="dar"></span><svg><use href="#selloc"/></svg>
    <span class="grip"></span>
    <svg><use href="#ident"/></svg><svg><use href="#abac"/></svg><svg><use href="#gear"/></svg><svg><use href="#sigma"/></svg><svg><use href="#tab"/></svg><span class="dar"></span><svg><use href="#ruler"/></svg><span class="dar"></span><svg><use href="#tip"/></svg><svg class="off"><use href="#act"/></svg><span class="dar"></span>
  </div>
  <div class="tbar last d-flex align-items-center">
    <span class="grip" style="width:8px;padding:0 1px"></span>
    <svg><use href="#dsrc"/></svg><svg><use href="#gpkgn"/></svg><svg><use href="#vn"/></svg><svg><use href="#fen"/></svg><svg><use href="#chip"/></svg><svg><use href="#mesh"/></svg>
    <span class="vsep"></span><svg><use href="#virt"/></svg><span class="vsep me-0"></span>
    <span class="grip"></span>
    <svg class="off"><use href="#pens"/></svg><svg class="off"><use href="#pen"/></svg><svg class="off"><use href="#sav2"/></svg><svg class="off"><use href="#blob"/></svg><svg class="off"><use href="#vtx"/></svg><span class="dar"></span><svg class="off"><use href="#medit"/></svg><svg class="off"><use href="#trash"/></svg><svg class="off"><use href="#cut"/></svg><svg class="off"><use href="#copy"/></svg><svg class="off"><use href="#paste"/></svg><svg class="off"><use href="#undo"/></svg><svg class="off"><use href="#redo"/></svg>
    <span class="grip"></span>
    <svg><use href="#abc"/></svg><svg><use href="#dia"/></svg><span class="vsep"></span><svg><use href="#abp"/></svg><svg><use href="#abr"/></svg><span class="vsep me-0"></span>
    <svg class="off"><use href="#ag1"/></svg><svg class="off"><use href="#ag2"/></svg><svg class="off"><use href="#ag3"/></svg><svg class="off"><use href="#ag4"/></svg><svg class="off"><use href="#ag5"/></svg>
    <span class="grip"></span><svg><use href="#bino"/></svg><span class="grip"></span><svg><use href="#py"/></svg><span class="grip"></span><svg><use href="#help"/></svg><span class="grip"></span>
  </div>

  <div class="d-flex flex-grow-1 overflow-hidden">
    <div class="side d-flex flex-column flex-shrink-0">
      <div class="dock-t d-flex align-items-center"><span class="me-auto">Navegador</span>
        <svg width="22" height="10" viewBox="0 0 22 10" fill="none" stroke="#555"><rect x=".5" y="1" width="8" height="8" rx="1"/><path d="M4 2.500h3.500v3H4zM2 4.500h3v3H2z" stroke-width=".8"/><rect x="12.500" y="1" width="8" height="8" rx="1"/><path d="M14.500 3l4 4M18.500 3l-4 4" stroke-width="1.200"/></svg></div>
      <div class="dbar d-flex align-items-center"><svg><use href="#addb"/></svg><svg><use href="#refresh"/></svg><svg><use href="#funnel"/></svg><svg><use href="#coll"/></svg><svg><use href="#info"/></svg></div>
      <div class="tree">
        <div class="trow d-flex align-items-center"><svg><use href="#star"/></svg><span>Favoritos</span></div>
        <div class="trow d-flex align-items-center"><span class="tw tri-r"></span><svg><use href="#sbm"/></svg><span>Marcadores espaciales</span></div>
        <div class="trow d-flex align-items-center"><span class="tw tri-r"></span><svg><use href="#home"/></svg><span>Inicio</span></div>
        <div class="trow d-flex align-items-center"><span class="tw tri-r"></span><svg><use href="#fold"/></svg><span>/ (Macintosh HD)</span></div>
        <div class="trow d-flex align-items-center"><span class="tw tri-r"></span><svg><use href="#fold"/></svg><span>/Volumes</span></div>
        <div class="trow d-flex align-items-center"><svg><use href="#gpkg"/></svg><span>GeoPackage</span></div>
        <div class="trow d-flex align-items-center"><svg><use href="#fe"/></svg><span>SpatiaLite</span></div>
        <div class="trow d-flex align-items-center"><svg><use href="#pg"/></svg><span>PostGIS</span></div>
        <div class="trow d-flex align-items-center"><svg><use href="#ms"/></svg><span>MSSQL</span></div>
        <div class="trow d-flex align-items-center"><svg><use href="#ora"/></svg><span>Oracle</span></div>
        <div class="trow d-flex align-items-center"><span class="tw tri-r"></span><svg><use href="#gl"/></svg><span>WMS/WMTS</span></div>
        <div class="trow d-flex align-items-center"><svg><use href="#vt"/></svg><span>Vector Tiles</span></div>
        <div class="trow d-flex align-items-center"><span class="tw tri-d"></span><svg><use href="#xyz"/></svg><span>XYZ Tiles</span></div>
        <div class="trow d-flex align-items-center"><svg style="margin-left:13px"><use href="#xyz"/></svg><span style="letter-spacing:.08px">OpenStreetMap</span></div>
        <div class="trow d-flex align-items-center"><svg><use href="#wcs"/></svg><span>WCS</span></div>
        <div class="trow d-flex align-items-center"><span class="tw tri-d"></span><svg><use href="#wfs"/></svg><span>WFS / OGC API - Features</span></div>
      </div>
      <div class="mx-auto" style="height:6px;padding-top:2px"><div class="dots"></div></div>
      <div class="dock-t d-flex align-items-center">Capas</div>
      <div class="dbar d-flex align-items-center flex-shrink-0"><svg><use href="#brush"/></svg><svg><use href="#grpadd"/></svg><svg><use href="#eye"/></svg><svg><use href="#funnel"/></svg><svg><use href="#eps"/></svg><span class="dar"></span><svg><use href="#expd"/></svg><svg><use href="#coll"/></svg><svg><use href="#rem"/></svg></div>
      <div class="layers flex-shrink-0">
        <div class="lrow cur d-flex align-items-center"><span class="cb"><svg><use href="#chk"/></svg></span><span class="sw" style="background:#87a5b8"></span>BaseDatosGeografica — Area</div>
        <div class="lrow d-flex align-items-center"><span class="cb"><svg><use href="#chk"/></svg></span><span class="sw" style="background:#77bb66"></span>BaseDatosGeografica — Area</div>
        <div class="lrow d-flex align-items-center"><span class="cb"><svg><use href="#chk"/></svg></span><span class="sw"><svg width="4" height="4"><circle cx="2" cy="2" r="1.300" fill="#8a5550"/></svg></span>BaseDatosGeografica — Cali</div>
        <div class="lrow d-flex align-items-center"><span class="cb"><svg><use href="#chk"/></svg></span><span class="sw"><svg width="14" height="2"><path d="M0 1h14" stroke="#f0e2ae"/></svg></span>BaseDatosGeografica — Cap</div>
        <div class="lrow d-flex align-items-center"><span class="cb"><svg><use href="#chk"/></svg></span><span class="sw"><svg width="4" height="4"><circle cx="2" cy="2" r="1.300" fill="#4c7f62"/></svg></span>BaseDatosGeografica — Cap</div>
        <div class="lrow d-flex align-items-center"><span class="cb"><svg><use href="#chk"/></svg></span><span class="sw" style="background:#ffa0b3"></span>BaseDatosGeografica — Cob</div>
        <div class="lrow d-flex align-items-center"><span class="cb"><svg><use href="#chk"/></svg></span><span class="sw" style="background:#9556a2"></span>BaseDatosGeografica — Con</div>
        <div class="lrow d-flex align-items-center"><span class="cb"><svg><use href="#chk"/></svg></span><span class="sw" style="background:#fb658d"></span>BaseDatosGeografica — Eco</div>
        <div class="lrow d-flex align-items-center"><svg class="tabi ms-0"><use href="#ltab"/></svg>BaseDatosGeografica — EvalEco</div>
        <div class="lrow d-flex align-items-center"><svg class="tabi ms-0"><use href="#ltab"/></svg>BaseDatosGeografica — EvalEco</div>
        <div class="lrow d-flex align-items-center"><span class="cb"><svg><use href="#chk"/></svg></span><span class="sw" style="background:#ff9900"></span>BaseDatosGeografica — Frag</div>
        <div class="lrow d-flex align-items-center"><span class="cb"><svg><use href="#chk"/></svg></span><span class="sw" style="background:#c63c48"></span>BaseDatosGeografica — Frag</div>
        <div class="lrow d-flex align-items-center"><span class="cb"><svg><use href="#chk"/></svg></span><span class="sw" style="background:#fb6a3b"></span>BaseDatosGeografica — FuenteDispersaEmisionL</div>
        <div class="lrow d-flex align-items-center"><span class="cb"><svg><use href="#chk"/></svg></span><span class="sw"><svg width="4" height="4"><circle cx="2" cy="2" r="1.300" fill="#8552a5"/></svg></span>BaseDatosGeografica — FuenteDispersaEmisionL</div>
        <div class="sb d-flex flex-column justify-content-end position-absolute end-0 top-0 bottom-0" style="width:12px"><span class="arr ad" style="height:12px"></span></div>
      </div>
      <div class="sb d-flex" style="width:331px;height:12px"><span class="arr al" style="width:10px"></span><span class="th" style="width:266px"></span><span class="flex-grow-1"></span><span class="arr ar" style="width:12px"></span><span style="width:11px;background:#ebebeb"></span></div>
    </div>
    <div class="flex-grow-1 bg-white">
      <svg width="743" height="553" viewBox="337 65.500 743 553"><path d="M612.700 80l4 1 1 5.700 4 4 3 6.300h-17.400l1-3.700 2.400-2.600-4.700-5.700 5.700 1.700 4.300.6-1-4z" fill="#6f8488" stroke="#333" stroke-width=".8"/><path d="M743 588h10l-1 4-4 1-2-2-3-1z" fill="#4f6065" stroke="#222" stroke-width=".7"/><path d="M826 588h48c-1 6-8 11-14 14-8 4-18 4-24-2-5-4-8-8-10-12z" fill="#586a70" stroke="#222" stroke-width=".8"/></svg>
    </div>
  </div>

  <div class="stat d-flex align-items-center flex-shrink-0">
    <div class="fld" style="width:241px;color:#777;font-size:10.600px;letter-spacing:0;padding-left:6px"><svg width="11" height="11" style="margin-right:6px"><use href="#srch"/></svg>Escriba para localizar (⌘K)</div>
    <span class="clipt" style="width:15px;margin-left:8px">Li</span>
    <span class="clipt" style="width:52px;direction:rtl">Coordenada</span>
    <div class="fld" style="width:99px;margin-left:2px;padding-left:5px">5033264,2028093</div>
    <svg width="14" height="14" style="margin-left:3px"><use href="#sat"/></svg>
    <span class="clipt" style="width:30px;margin-left:8px">Escala</span>
    <div class="fld" style="width:78px"><span class="flex-grow-1" style="padding-left:2px">1:341982</span><span class="arr ad h-100" style="width:16px;border-left:1px solid #ccc"></span></div>
    <svg width="12" height="14" style="margin-left:10px"><use href="#lock"/></svg>
    <span class="clipt" style="width:55px;margin-left:5px;direction:rtl">Amplificador</span>
    <div class="fld" style="width:76px;margin-left:2px"><span class="flex-grow-1" style="padding-left:3px">100%</span><span class="spin"></span></div>
    <span style="margin-left:7px;width:38px">Rotación</span>
    <div class="fld" style="width:78px;margin-left:7px"><span class="flex-grow-1" style="padding-left:3px">0.0 °</span><span class="spin"></span></div>
    <span class="cb" style="margin-left:6px"><svg><use href="#chk"/></svg></span><span style="margin-left:4px">Representar</span>
    <div class="crsbox d-flex align-items-center ps-1"><svg width="13" height="13"><use href="#sph"/></svg><span style="margin-left:1px">SRC desconocido</span></div>
    <svg width="15" height="15" viewBox="0 0 15 15" class="position-absolute" style="left:1043px;top:6px"><path d="M7.500 1.500c8 0 8 10 2.500 10.500l2 2.500-4.500-2C-1 12.500-1 1.500 7.500 1.500z" fill="#555"/></svg>
  </div>

  <div class="note" style="left:1010px;top:586px">A.</div>
  <div class="note" style="left:1000px;top:232px">B.</div>

  <div class="dlg d-flex flex-column">
    <div class="dt d-flex align-items-center position-relative justify-content-center">
      <div class="position-absolute d-flex" style="left:6px;gap:6.400px"><span class="tl" style="background:#fe5f57"></span><span class="tl" style="background:#d3d4d4"></span><span class="tl" style="background:#28c840"></span></div>
      <span>Propiedades del proyecto — SRC</span>
    </div>
    <div class="d-flex flex-grow-1">
      <div class="nav-side flex-shrink-0">
        <div class="nsearch d-flex align-items-center"><svg width="12" height="12"><use href="#srch"/></svg></div>
        <div class="ni d-flex align-items-center"><svg><use href="#tools"/></svg>General</div>
        <div class="ni d-flex align-items-center"><svg><use href="#meta"/></svg>Metadatos</div>
        <div class="ni d-flex align-items-center"><svg><use href="#view"/></svg>Configuración de vista</div>
        <div class="ni on d-flex align-items-center"><svg><use href="#crs"/></svg>SRC</div>
        <div class="ni d-flex align-items-center"><svg><use href="#trf"/></svg>Transformations</div>
        <div class="ni d-flex align-items-center"><svg><use href="#est"/></svg>Estilos predeterminados</div>
        <div class="ni d-flex align-items-center"><svg><use href="#tab"/></svg>Fuentes de datos</div>
        <div class="ni d-flex align-items-center"><svg><use href="#rel"/></svg>Relaciones</div>
        <div class="ni d-flex align-items-center"><svg><use href="#epsb"/></svg>Variables</div>
        <div class="ni d-flex align-items-center"><svg><use href="#mac"/></svg>Macros</div>
        <div class="ni d-flex align-items-center"><svg><use href="#srv"/></svg>Servidor de QGIS</div>
        <div class="ni d-flex align-items-center"><svg><use href="#clock"/></svg>Temporal</div>
      </div>
      <div class="flex-grow-1 d-flex flex-column" style="padding:10.500px 3px 0 3px">
        <div class="h-b" style="margin-left:9.500px;font-size:11px;height:16px">Sistema de Referencia de Coordenadas (SRC) del proyecto</div>
        <div class="grp" style="margin-left:9px">
          <div class="d-flex align-items-center" style="height:35px"><span class="cb" style="width:12px;height:12px"></span><span style="margin-left:4px;font-size:10.770px">Ninguna proyección (o desconocida/no terrestre)</span></div>
          <div class="d-flex align-items-center" style="height:14px"><span style="width:31px">Filtro</span><div class="fld" style="width:539px;height:20px;border-radius:0"><svg width="12" height="12" style="margin-left:6px"><use href="#srch"/></svg></div></div>
          <div class="h-b" style="margin-top:7.500px;height:20px;font-size:10.800px">Sistemas de referencia de coordenadas usados recientemente</div>
          <div class="tbl d-flex flex-column" style="height:119.500px">
            <div class="th-r d-flex flex-shrink-0"><span class="c1" style="padding-left:1.500px">Sistema de referencia de coordenadas</span><span class="c2 flex-grow-1">ID de la autoridad</span></div>
            <div class="d-flex text-white" style="background:#0068ea;height:13.500px;line-height:13.500px"><span class="c1">MAGNA-SIRGAS / CTM12</span><span class="c2">USER:100000</span></div>
            <div class="d-flex alt" style="height:13.500px;line-height:13.500px"><span class="c1">WGS 84</span><span class="c2">EPSG:4326</span></div>
            <div class="sb d-flex mt-auto border-start-0 border-end-0 border-bottom-0" style="height:12px"><span class="arr al" style="width:11px;border-right:1px solid #ccc"></span><span class="th flex-grow-1"></span><span class="arr ar" style="width:13px;border-left:2px solid #ccc"></span></div>
          </div>
          <div class="dots mx-auto"></div>
          <div class="d-flex align-items-center justify-content-between" style="height:23px;padding:0 5px 2px 0"><span class="h-b" style="font-size:10.800px">Predefined Coordinate Reference Systems</span><span class="d-flex align-items-center" style="font-size:7.900px"><span class="cb me-1" style="width:12px;height:12px"></span>Esconder SRC obsoletos</span></div>
          <div class="tbl d-flex" style="height:88.500px">
            <div class="flex-grow-1 d-flex flex-column">
              <div class="th-r d-flex flex-shrink-0" style="height:14.500px"><span class="c1" style="padding-left:1.500px">Sistema de referencia de coordenadas</span><span class="c2 flex-grow-1">ID de la autoridad</span></div>
              <div class="d-flex" style="height:15.200px"><span class="c1" style="padding-left:53px">Sphere_Van_der _ Grinten_I</span><span class="c2">ESRI:53029</span></div>
              <div class="d-flex alt" style="height:15.200px"><span class="c1" style="padding-left:53px">World_Van_der _ Grinten_I</span><span class="c2">ESRI:54029</span></div>
              <div class="d-flex align-items-center" style="height:15.200px;padding-left:5px"><span class="tri-d d-flex"></span><svg width="12" height="12" style="margin:0 6px 0 9px"><use href="#user"/></svg><b><i style="font-size:11px">Sistemas de coordenadas definidos por el usuario</i></b></div>
              <div class="d-flex" style="height:15.400px;background:#dcdcdc"><span class="c1" style="padding-left:36px">MAGNA-SIRGAS / CTM12</span><span class="c2">USER:100000</span></div>
              <div class="sb d-flex border-0 flex-grow-1"><span class="arr al" style="width:11px;border-right:1px solid #ccc"></span><span class="th flex-grow-1"></span><span style="width:13px;border-left:1px solid #ccc"></span><span class="arr ar" style="width:11px"></span></div>
            </div>
            <div class="sb d-flex flex-column border-0" style="width:12px;border-left:1px solid #ccc!important"><span class="arr au" style="height:12px"></span><span style="height:28px;border-bottom:1px solid #bbb"></span><span class="th flex-grow-1"></span><span class="arr ad" style="height:12px;border-top:1px solid #ccc"></span><span style="height:11px;border-top:1px solid #ccc"></span></div>
          </div>
          <div class="dots mx-auto"></div>
          <div class="d-flex" style="gap:6px;height:81px;margin-top:1.500px">
            <div class="tbl d-flex" style="width:282px">
              <div class="flex-grow-1 overflow-hidden" style="padding-left:3px">
                <div class="h-b" style="font-size:10.700px;margin-top:3px">MAGNA-SIRGAS / CTM12</div>
                <div class="h-b" style="font-size:9.200px;margin-top:7.500px">Propiedades</div>
                <div style="font-size:9.300px;line-height:10.900px;margin:8.500px 0 0 52px">• Units: metros<br>• Static (relies on a datum which is plate-fixed)<br>• Method: Transverse Mercator</div>
              </div>
              <div class="sb d-flex flex-column border-0" style="width:12px;border-left:1px solid #ccc!important"><span class="arr au" style="height:12px"></span><span class="th" style="height:22px;border:solid #ccc;border-width:1px 0"></span><span class="flex-grow-1"></span><span class="arr ad" style="height:12px"></span></div>
            </div>
            <div class="tbl" style="width:282px">
              <svg width="281" height="80" viewBox="0 0 281 80">
                <g fill="#eceade" stroke="#8d8c82" stroke-width=".7" stroke-linejoin="round">
                  <path d="M57 0l7 2 7 .5 7-.5 3 4 5 4 9 3 5 4 4 4 3 4 4 1 3 3 4 1 3-1 3 3 4-1 2-4 4 1 1 4 3-3-2-3-5-4-4 3-5 1-4-2-4-3-2-6 1-7-2-5-4-2-10-1-11-1-4-2z"/>
                  <path d="M134 31l3-5 5-3 1-4 4-2 6-1 4-1-2 5 4-2 6 1 7 1 10 3 7-1 4 3 3 4 7 3 7 3 5 3 8 1 4 3 4 6-3 8-2 4 7-3 5 3 8 1 6 5 12 1 9 2 9 7v3H121l2-8 0-8 4-6 4-5 3-5-1-8z"/>
                </g>
                <g fill="none" stroke="#8d8c82" stroke-width=".8"><path d="M81 5l6-5M86 10l5-7 9 1M91 7l12 1 3-3M103 8l-2 10M157 15l-5 5-1 8 4 6 7 2 8 1 1 8 0 9-8 1-1 4 0 9-2 2-9-3-8-4-4-3-9-5M130 56l9 4 4 1 7 2M143 61l-4 6-8 6-3 7M150 65l-5 5-3 6 10-1 6 4M161 68l1 6-4 5M171 51l4 6 8-2 3-7 8-4 3-3-3-3"/><path d="M197 29l3 4-3 5 0 4 3 7 4 6 8-1 6-2 7 1 5-2 4-3M200 33l6 1 4 5M213 36l-4 6 4 12M220 39l-2 6 2 8M229 41l-2 6-2 5M232 55l-2 6 5 2 4 4M157 23q5-2 3 3-4 3-3-3z"/></g>
                <path d="M192 0l1 6-1 5 1 4-2 5-4 3M200 12l.5 1M18 23h1M83 57l3 1M84 61l6 1M83 63.500h4M99 40v1M163 14l7 2 7 1M178 18h3M118 13v2M120 46h1" fill="none" stroke="#8d8c82" stroke-width="1.300" stroke-dasharray="1.500 1.200"/>
                <rect x="108" y="4" width="65.500" height="73" fill="#ff4040" fill-opacity=".36" stroke="#fb6f70" stroke-opacity=".75" stroke-width="2.600"/>
                <path d="M151 39v11M145.500 44.500h11" stroke="#bd45de" stroke-width="2"/>
              </svg>
            </div>
          </div>
        </div>
        <div class="d-flex" style="margin-top:13px;gap:5px"><button class="btn btnx">Help</button><button class="btn btnx me-auto">Apply</button><button class="btn btnx">Cancel</button><button class="btn btnx prim">OK</button></div>
      </div>
    </div>
  </div>
</div>
</body>
</html>
